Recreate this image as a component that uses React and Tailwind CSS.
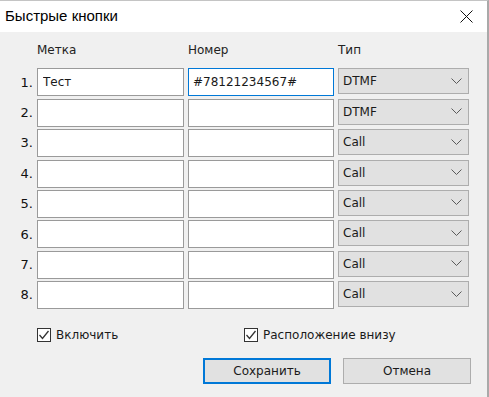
import { useState } from 'react'

const rows = [
  { label: 'Тест', number: '#78121234567#', type: 'DTMF' },
  { label: '', number: '', type: 'DTMF' },
  { label: '', number: '', type: 'Call' },
  { label: '', number: '', type: 'Call' },
  { label: '', number: '', type: 'Call' },
  { label: '', number: '', type: 'Call' },
  { label: '', number: '', type: 'Call' },
  { label: '', number: '', type: 'Call' },
]

function Chevron() {
  return (
    <svg width="11" height="7" viewBox="0 0 11 7" className="text-[#5a5a5a]">
      <polyline points="0.5,0.5 5.5,5.5 10.5,0.5" fill="none" stroke="currentColor" strokeWidth="1" />
    </svg>
  )
}

function Checkbox({ checked, label, onChange }) {
  return (
    <label className="flex items-center gap-[5px] cursor-default select-none">
      <span className="w-[14px] h-[14px] bg-white border border-[#333333] flex items-center justify-center" onClick={onChange}>
        {checked && (
          <svg width="12" height="12" viewBox="0 0 12 12">
            <polyline points="1.5,6 4.5,9.5 10.5,2" fill="none" stroke="#333333" strokeWidth="1.3" />
          </svg>
        )}
      </span>
      <span>{label}</span>
    </label>
  )
}

export default function App() {
  const [data, setData] = useState(rows)
  const [enabled, setEnabled] = useState(true)
  const [bottom, setBottom] = useState(true)

  const update = (i, key, value) => {
    setData(data.map((r, j) => (j === i ? { ...r, [key]: value } : r)))
  }

  return (
    <div className="w-[489px] h-[397px] bg-[#f0f0f0] flex flex-col text-[12px] text-[#1a1a1a] font-['DejaVu_Sans',sans-serif] border-t border-[#c4c4c4] border-r-2 border-r-[#a9a9a9] overflow-hidden">
      <header className="h-[31px] bg-white flex items-center justify-between pl-[5px] pr-[14px] shrink-0">
        <h1 className="text-[15px] font-['Liberation_Sans',sans-serif] text-black font-normal">Быстрые кнопки</h1>
        <svg width="13" height="13" viewBox="0 0 13 13">
          <path d="M0.5 0.5 L12.5 12.5 M12.5 0.5 L0.5 12.5" stroke="#111" strokeWidth="1" />
        </svg>
      </header>

      <main className="flex-1 pt-[11px]">
        <div className="grid grid-cols-[33px_147px_146px_131px] gap-x-[4px] gap-y-[2.4px] items-start">
          <span />
          <span className="text-[#222] leading-[15px] mb-[8px]">Метка</span>
          <span className="text-[#222] leading-[15px] mb-[8px]">Номер</span>
          <span className="text-[#222] leading-[15px] mb-[8px]">Тип</span>

          {data.map((r, i) => (
            <div key={i} className="contents">
              <span className="h-[28px] flex items-center justify-end text-[13px] text-[#111]">{i + 1}.</span>
              <input
                value={r.label}
                onChange={(e) => update(i, 'label', e.target.value)}
                className="h-[28px] bg-white border border-[#9a9a9a] px-[5px] outline-none text-[12px]"
              />
              <input
                value={r.number}
                onChange={(e) => update(i, 'number', e.target.value)}
                className={`h-[28px] bg-white border px-[4px] outline-none text-[12px] ${i === 0 ? 'border-[#0078d7]' : 'border-[#9a9a9a]'}`}
              />
              <div className="h-[26px] bg-[#e1e1e1] border border-[#adadad] flex items-center justify-between pl-[4px] pr-[6px]">
                <span>{r.type}</span>
                <Chevron />
              </div>
            </div>
          ))}
        </div>

        <div className="flex items-center mt-[17px] pl-[37px]">
          <div className="w-[207px]">
            <Checkbox checked={enabled} label="Включить" onChange={() => setEnabled(!enabled)} />
          </div>
          <Checkbox checked={bottom} label="Расположение внизу" onChange={() => setBottom(!bottom)} />
        </div>

        <div className="flex justify-end gap-[12px] mt-[14px] pr-[16px]">
          <button className="w-[128px] h-[26px] bg-[#e1e1e1] border-2 border-[#0078d7] text-[#1a1a1a]">Сохранить</button>
          <button className="w-[128px] h-[26px] bg-[#e1e1e1] border border-[#adadad] text-[#1a1a1a]">Отмена</button>
        </div>
      </main>
    </div>
  )
}
